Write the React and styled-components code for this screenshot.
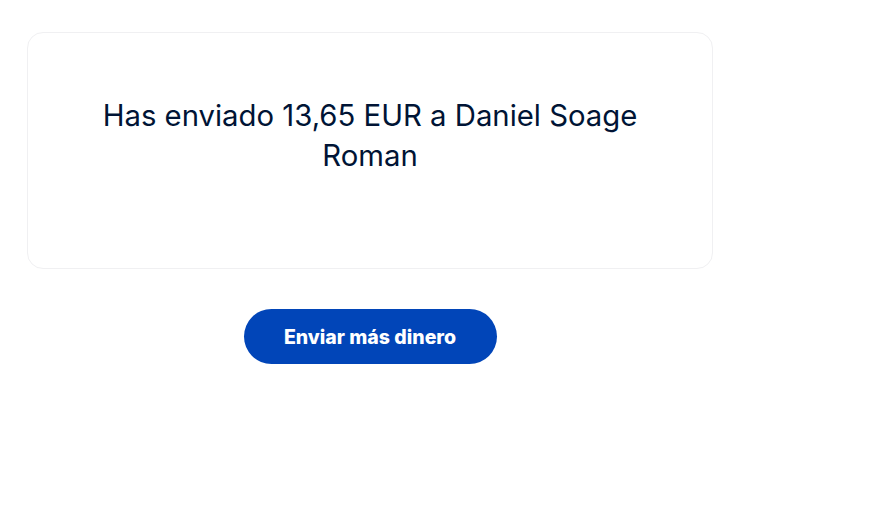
import React from 'react';
import styled, { createGlobalStyle } from 'styled-components';

const GlobalStyle = createGlobalStyle`
  body {
    margin: 0;
    background: #ffffff;
    font-family: Inter, 'Noto Sans', sans-serif;
  }
`;

const Page = styled.div`
  padding: 32px 0 0 27px;
  width: 686px;
  display: flex;
  flex-direction: column;
  align-items: center;
`;

const Card = styled.div`
  box-sizing: border-box;
  width: 686px;
  height: 237px;
  padding: 63px 56px 0;
  border: 1px solid #f0f0f2;
  border-radius: 16px;
  text-align: center;
`;

const Message = styled.p`
  margin: 0;
  font-size: 29.3px;
  line-height: 40px;
  font-weight: 400;
  color: #001435;
`;

const Button = styled.button`
  margin-top: 40px;
  width: 253px;
  height: 55px;
  border: none;
  border-radius: 28px;
  background: #0145b8;
  color: #ffffff;
  font-family: Inter, 'Noto Sans', sans-serif;
  font-size: 19.5px;
  font-weight: 800;
  cursor: pointer;
`;

const App = () => {
  return (
    <>
      <GlobalStyle />
      <Page>
        <Card>
          <Message>Has enviado 13,65 EUR a Daniel Soage Roman</Message>
        </Card>
        <Button>Enviar más dinero</Button>
      </Page>
    </>
  );
};

export default App;
